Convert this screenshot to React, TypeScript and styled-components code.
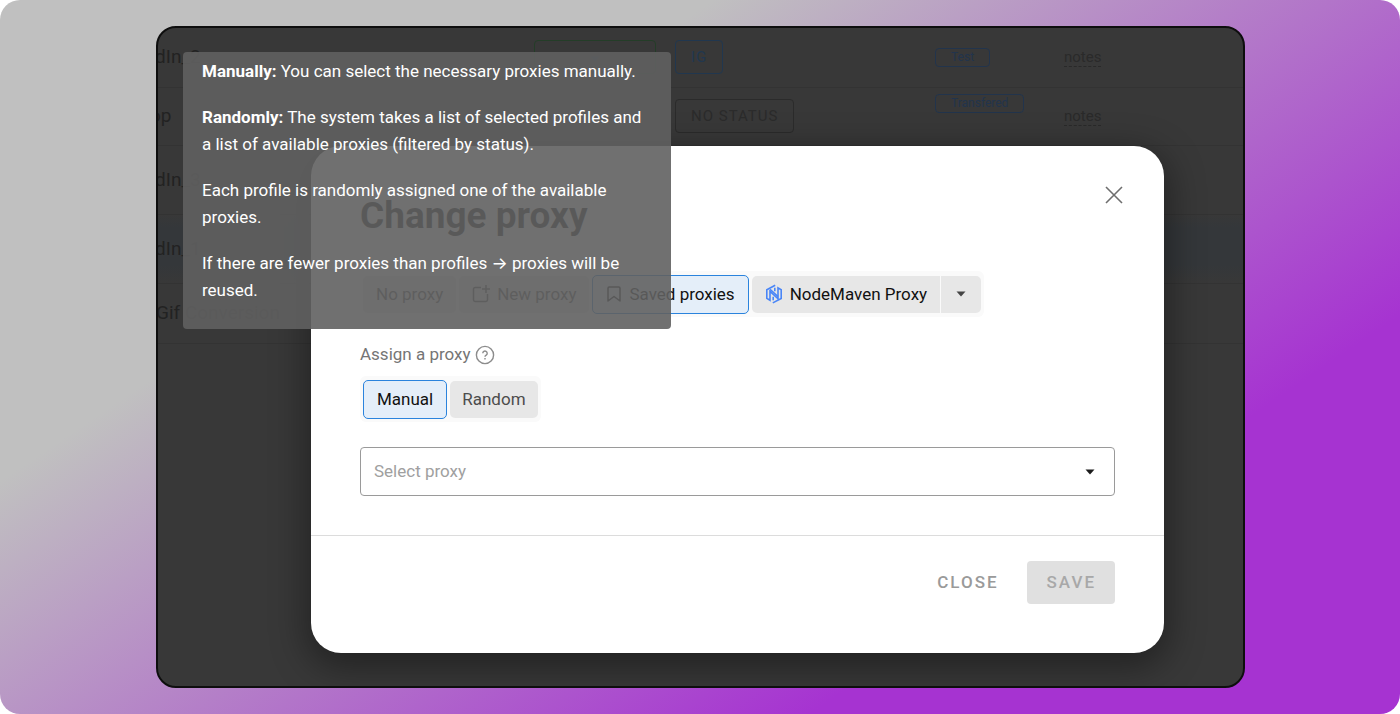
import React from 'react';
import styled, { createGlobalStyle } from 'styled-components';

const GlobalStyle = createGlobalStyle`
  * { box-sizing: border-box; }
  body {
    margin: 0;
    background: #fff;
    font-family: Roboto, "Liberation Sans", sans-serif;
    font-size: 17px;
    line-height: 27px;
  }
  button, select { font: inherit; }
`;

const Backdrop = styled.main`
  display: grid;
  min-height: 100vh;
  padding: 26px 155px 26px 156px;
  border-radius: 20px;
  background: linear-gradient(146deg, #c0c0c0 29%, #a633d1 76%);
`;

const Screen = styled.div`
  position: relative;
  display: grid;
  overflow: hidden;
  border: 2px solid #0e0e0e;
  border-radius: 20px;
  background: #383838;
`;

const ProfileTable = styled.table`
  grid-area: 1 / 1;
  align-self: start;
  width: 100%;
  border-collapse: collapse;
  table-layout: fixed;
  color: #222;
`;

const ProfileRow = styled.tr<{ $height: number; $active?: boolean }>`
  height: ${(p) => p.$height}px;
  border-bottom: 1px solid #333;
  background: ${(p) =>
    p.$active ? 'linear-gradient(#383838, #34373a 20%, #34373a 75%, #383838)' : 'transparent'};
`;

const Cell = styled.td<{ $top?: boolean }>`
  padding: ${(p) => (p.$top ? '6px 0 0' : '0')};
  vertical-align: ${(p) => (p.$top ? 'top' : 'middle')};
  white-space: nowrap;
`;

const ProfileName = styled.span<{ $clip: number }>`
  margin-left: -${(p) => p.$clip}px;
  font-size: 19px;
`;

const StatusButton = styled.button<{ $tone: string; $line: string; $wide?: boolean }>`
  height: 34px;
  width: ${(p) => (p.$wide ? '122px' : 'auto')};
  padding: 0 15px;
  border: 1px solid ${(p) => p.$line};
  border-radius: 4px;
  background: transparent;
  color: ${(p) => p.$tone};
  font-size: 15px;
  line-height: 30px;
  letter-spacing: 1px;
  vertical-align: middle;
`;

const Tag = styled.span`
  display: block;
  width: max-content;
  padding: 0 15px;
  border: 1px solid #22344c;
  border-radius: 4px;
  color: #22344c;
  font-size: 12px;
  line-height: 17px;
`;

const Note = styled.a`
  display: block;
  width: max-content;
  border-bottom: 1px dashed #292929;
  color: #2a2a2a;
  font-size: 15px;
  line-height: 18px;
  text-decoration: none;
`;

const Overlay = styled.div`
  grid-area: 1 / 1;
  z-index: 1;
  padding: 118px 79px 33px 153px;
`;

const Dialog = styled.section`
  border-radius: 30px;
  background: #fff;
  box-shadow: 0 10px 36px 4px rgba(0, 0, 0, 0.4);
`;

const DialogBody = styled.div`
  display: flex;
  flex-direction: column;
  padding: 35px 49px 39px;
`;

const DialogHeader = styled.header`
  display: flex;
  align-items: flex-start;
  justify-content: space-between;
`;

const Title = styled.h1`
  margin: 11px 0 0;
  color: #1c1c1c;
  font-size: 37px;
  font-weight: 700;
  line-height: 48px;
`;

const CloseIcon = styled.button`
  display: flex;
  margin-right: -13px;
  padding: 4px;
  border: 0;
  background: transparent;
  color: #6e6e6e;
`;

const Segments = styled.div`
  display: flex;
  align-items: center;
  align-self: flex-start;
  gap: 3px;
  height: 46px;
  padding: 3px;
  border-radius: 6px;
  background: #fafafa;
`;

const Segment = styled.button<{ $selected?: boolean; $strong?: boolean }>`
  display: flex;
  align-items: center;
  gap: 7px;
  height: ${(p) => (p.$selected ? 39 : 37)}px;
  padding: 0 ${(p) => (p.$selected ? 13 : 12)}px;
  border: ${(p) => (p.$selected ? '1px solid #2a83dd' : '0')};
  border-radius: 5px;
  background: ${(p) => (p.$selected ? '#e4eef9' : '#e7e7e7')};
  color: ${(p) => (p.$selected || p.$strong ? '#111' : '#4c4c4c')};
  white-space: nowrap;
`;

const SourceSegments = styled(Segments)`
  margin-top: 31px;

  ${Segment} { padding: 0 13px; }
`;

const SplitSegment = styled.div`
  display: flex;
  gap: 1px;

  ${Segment}:first-child { border-radius: 5px 0 0 5px; }
  ${Segment}:last-child { padding: 0 15px; border-radius: 0 5px 5px 0; }
`;

const FieldLabel = styled.div`
  display: flex;
  align-items: center;
  gap: 4px;
  margin: 24px 0 8px;
  color: #757575;
`;

const SelectWrap = styled.label`
  display: grid;
  align-items: center;
  margin-top: 25px;

  > * { grid-area: 1 / 1; }
  > svg { justify-self: end; margin-right: 20px; pointer-events: none; }
`;

const ProxySelect = styled.select`
  appearance: none;
  width: 100%;
  height: 49px;
  padding: 0 13px;
  border: 1px solid #9a9a9a;
  border-radius: 4px;
  background: #fff;
  color: #a0a0a0;
`;

const DialogFooter = styled.footer`
  display: flex;
  justify-content: flex-end;
  gap: 9px;
  padding: 25px 49px 49px;
  border-top: 1px solid #dcdcdc;
`;

const ActionButton = styled.button<{ $filled?: boolean }>`
  height: 43px;
  padding: 0 19px 0 20px;
  border: 0;
  border-radius: 4px;
  background: ${(p) => (p.$filled ? '#e0e0e0' : 'transparent')};
  color: ${(p) => (p.$filled ? '#a8a8a8' : '#9a9a9a')};
  font-weight: 500;
  letter-spacing: 2px;
`;

const Tooltip = styled.div`
  position: absolute;
  z-index: 2;
  top: 24px;
  left: 25px;
  width: 488px;
  padding: 6px 19px 25px;
  border-radius: 4px;
  background: rgba(97, 97, 97, 0.9);
  color: #fff;

  p { margin: 0; }
  p + p { margin-top: 19px; }
`;

const Arrow = styled.span`
  font-family: Inter, sans-serif;
  line-height: 1;
`;

const CaretIcon = ({ color }: { color: string }) => (
  <svg width="10" height="6" viewBox="0 0 10 6" aria-hidden="true">
    <path d="M0.5 0.5h9L5 5.5z" fill={color} />
  </svg>
);

const NewIcon = () => (
  <svg width="18" height="18" viewBox="0 0 18 18" fill="none" stroke="currentColor" strokeWidth="1.5" aria-hidden="true">
    <path d="M9 2.5H3.2Q1.5 2.5 1.5 4.2v10.6q0 1.7 1.7 1.7h10.6q1.7 0 1.7-1.7V9M14 0v8M10 4h8" />
  </svg>
);

const BookmarkIcon = () => (
  <svg width="16" height="18" viewBox="0 0 16 18" fill="none" stroke="currentColor" strokeWidth="1.5" strokeLinejoin="round" aria-hidden="true">
    <path d="M2 3.2Q2 2 3.2 2h9.6Q14 2 14 3.2V16l-6-4.5L2 16z" />
  </svg>
);

const NodeMavenIcon = () => (
  <svg width="18" height="20" viewBox="0 0 18 20" fill="none" stroke="#4a86f7" strokeWidth="1.6" aria-hidden="true">
    <path d="M10.2 1.2L1.8 5.8v8.6l3.2 1.9V7.4l8 7.2V3.8l3.2 1.9v8.7l-8.400 4.500" />
    <path d="M5 5.300l8 7.200M8.200 12.800v3.400M9.800 3.800v3.400" />
  </svg>
);

const HelpIcon = () => (
  <svg width="20" height="20" viewBox="0 0 20 20" fill="none" stroke="#8c8c8c" strokeWidth="1.4" aria-hidden="true">
    <circle cx="10" cy="10" r="8.6" />
    <path d="M7.8 8.300a2.200 2.200 0 1 1 3.400 1.800c-.8.500-1.200.9-1.200 1.700M10 13v1.500" />
  </svg>
);

const profiles = [
  { name: 'dIn_2', clip: 3, height: 59, status: 'IG', tone: '#21374f', tag: 'Test' },
  { name: 'op', clip: 8, height: 58, status: 'NO STATUS', tone: '#2b2b2b', tag: 'Transfered' },
  { name: 'dIn_3', clip: 3, height: 69 },
  { name: 'dIn_1', clip: 3, height: 69, active: true },
  { name: 'Gif Conversion', clip: 2, height: 60 },
];

export default function App() {
  return (
    <>
      <GlobalStyle />
      <Backdrop>
        <Screen>
          <ProfileTable>
            <colgroup>
              <col style={{ width: 376 }} />
              <col style={{ width: 141 }} />
              <col style={{ width: 260 }} />
              <col style={{ width: 129 }} />
              <col />
            </colgroup>
            <tbody>
              {profiles.map((p) => (
                <ProfileRow key={p.name} $height={p.height} $active={p.active}>
                  <Cell><ProfileName $clip={p.clip}>{p.name}</ProfileName></Cell>
                  <Cell>
                    {p.status === 'IG' && (
                      <StatusButton $wide $tone="#21374f" $line="#243d28" aria-label="Start profile">
                        <CaretIcon color="#23364c" />
                      </StatusButton>
                    )}
                  </Cell>
                  <Cell>
                    {p.status && <StatusButton $tone={p.tone!} $line={p.tone!}>{p.status}</StatusButton>}
                  </Cell>
                  <Cell $top={p.tag === 'Transfered'}>{p.tag && <Tag>{p.tag}</Tag>}</Cell>
                  <Cell>{p.tag && <Note href="#notes">notes</Note>}</Cell>
                </ProfileRow>
              ))}
            </tbody>
          </ProfileTable>

          <Overlay>
            <Dialog role="dialog" aria-labelledby="dialog-title">
              <DialogBody>
                <DialogHeader>
                  <Title id="dialog-title">Change proxy</Title>
                  <CloseIcon aria-label="Close dialog">
                    <svg width="20" height="20" viewBox="0 0 20 20" stroke="currentColor" strokeWidth="1.6" aria-hidden="true">
                      <path d="M2 2l16 16M18 2L2 18" />
                    </svg>
                  </CloseIcon>
                </DialogHeader>

                <SourceSegments>
                  <Segment>No proxy</Segment>
                  <Segment><NewIcon />New proxy</Segment>
                  <Segment $selected><BookmarkIcon />Saved proxies</Segment>
                  <SplitSegment>
                    <Segment $strong><NodeMavenIcon />NodeMaven Proxy</Segment>
                    <Segment aria-label="More providers"><CaretIcon color="#444" /></Segment>
                  </SplitSegment>
                </SourceSegments>

                <FieldLabel>Assign a proxy <HelpIcon /></FieldLabel>
                <Segments>
                  <Segment $selected>Manual</Segment>
                  <Segment>Random</Segment>
                </Segments>

                <SelectWrap>
                  <ProxySelect aria-label="Select proxy" defaultValue="">
                    <option value="">Select proxy</option>
                  </ProxySelect>
                  <CaretIcon color="#1c1c1c" />
                </SelectWrap>
              </DialogBody>
              <DialogFooter>
                <ActionButton>CLOSE</ActionButton>
                <ActionButton $filled disabled>SAVE</ActionButton>
              </DialogFooter>
            </Dialog>
          </Overlay>

          <Tooltip role="tooltip">
            <p><b>Manually:</b> You can select the necessary proxies manually.</p>
            <p><b>Randomly:</b> The system takes a list of selected profiles and a list of available proxies (filtered by status).</p>
            <p>Each profile is randomly assigned one of the available proxies.</p>
            <p>If there are fewer proxies than profiles <Arrow>→</Arrow> proxies will be reused.</p>
          </Tooltip>
        </Screen>
      </Backdrop>
    </>
  );
}
